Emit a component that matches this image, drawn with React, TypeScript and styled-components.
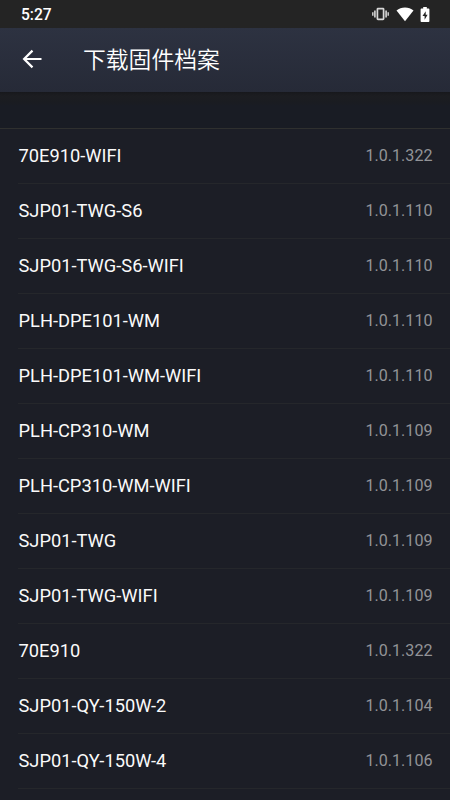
import React from 'react';
import styled, { createGlobalStyle } from 'styled-components';

const GlobalStyle = createGlobalStyle`
  * { box-sizing: border-box; }
  body {
    margin: 0;
    overflow: hidden;
    background: #1c1e26;
    font-family: Roboto, "Noto Sans CJK SC", sans-serif;
  }
`;

const Screen = styled.div`
  width: 100%;
  height: 100vh;
  display: flex;
  flex-direction: column;
  overflow: hidden;
  background: #1c1e26;
`;

const StatusBar = styled.div`
  flex: none;
  height: 28px;
  padding: 0 20px 0 21px;
  display: flex;
  align-items: center;
  justify-content: space-between;
  background: #242424;
  color: #fff;
`;

const Clock = styled.span`
  padding-top: 2px;
  font-size: 15.6px;
  line-height: 28px;
  font-weight: 500;
`;

const StatusIcons = styled.div`
  display: flex;
  align-items: center;
  gap: 6.5px;
  svg { display: block; }
`;

const AppBar = styled.header`
  flex: none;
  height: 64px;
  padding: 0 0 2px 20px;
  display: flex;
  align-items: center;
  background: linear-gradient(#2d3241, #262a37);
  color: #fff;
`;

const BackButton = styled.button`
  width: 24px;
  height: 24px;
  padding: 0;
  border: 0;
  background: none;
  color: inherit;
  svg { display: block; }
`;

const Title = styled.h1`
  margin: 0 0 0 39px;
  padding-top: 3px;
  font-size: 22.8px;
  line-height: 32px;
  font-weight: 350;
`;

const SectionGap = styled.div`
  flex: none;
  height: 37px;
  background: linear-gradient(#17181c, #1c1d21 4px, #1a1c21 10px, #191c24 14px);
  border-bottom: 1px solid #2f302f;
`;

const List = styled.ul`
  margin: 0;
  padding: 0;
  list-style: none;
`;

const Row = styled.li`
  height: 55px;
  margin-left: 18px;
  padding: 0 17.5px 0 0.5px;
  display: flex;
  align-items: center;
  justify-content: space-between;
  border-bottom: 1px solid #25272b;
`;

const Name = styled.span`
  color: #fafafa;
  font-size: 18.3px;
  line-height: 24px;
`;

const Version = styled.span`
  color: #929397;
  font-size: 16.1px;
  line-height: 24px;
`;

const firmware = [
  ['70E910-WIFI', '1.0.1.322'],
  ['SJP01-TWG-S6', '1.0.1.110'],
  ['SJP01-TWG-S6-WIFI', '1.0.1.110'],
  ['PLH-DPE101-WM', '1.0.1.110'],
  ['PLH-DPE101-WM-WIFI', '1.0.1.110'],
  ['PLH-CP310-WM', '1.0.1.109'],
  ['PLH-CP310-WM-WIFI', '1.0.1.109'],
  ['SJP01-TWG', '1.0.1.109'],
  ['SJP01-TWG-WIFI', '1.0.1.109'],
  ['70E910', '1.0.1.322'],
  ['SJP01-QY-150W-2', '1.0.1.104'],
  ['SJP01-QY-150W-4', '1.0.1.106'],
];

const VibrateIcon = () => (
  <svg width="17" height="14" viewBox="0 0 17 14" fill="none" stroke="#d8d8d8">
    <rect x="5.4" y="1.7" width="6.2" height="10.6" rx="0.6" strokeWidth="1.7" />
    <path d="M2.9 3.5v7M14.1 3.5v7" strokeWidth="1.6" />
    <path d="M0.8 5.2v3.6M16.2 5.2v3.6" strokeWidth="1.4" />
  </svg>
);

const WifiIcon = () => (
  <svg width="18" height="15" viewBox="0 0 18 15" fill="#fff">
    <path d="M9 14.2 0.5 3.6C2.8 1.6 5.8 0.6 9 0.6s6.2 1 8.5 3z" />
  </svg>
);

const BatteryIcon = () => (
  <svg width="10" height="15" viewBox="0 0 10 15">
    <path d="M3.2 0h3.6v1.500h1.8q.8 0 .8.9v11.7q0 .9-.8.9H1.4q-.8 0-.8-.9V2.4q0-.9.8-.9h1.8z" fill="#fff" />
    <path d="M5.7 4.200 2.500 9h2.100v3.800L7.600 7.700H5.700z" fill="#242424" />
  </svg>
);

const ArrowIcon = () => (
  <svg width="24" height="24" viewBox="0 0 24 24" fill="none" stroke="#fff" strokeWidth="2.2">
    <path d="M21.5 12H4.5M12.500 3.600 4.100 12l8.400 8.400" />
  </svg>
);

export default function App() {
  return (
    <Screen>
      <GlobalStyle />
      <StatusBar>
        <Clock>5:27</Clock>
        <StatusIcons>
          <VibrateIcon />
          <WifiIcon />
          <BatteryIcon />
        </StatusIcons>
      </StatusBar>
      <AppBar>
        <BackButton aria-label="返回"><ArrowIcon /></BackButton>
        <Title>下载固件档案</Title>
      </AppBar>
      <SectionGap />
      <List>
        {firmware.map(([name, version]) => (
          <Row key={name}>
            <Name>{name}</Name>
            <Version>{version}</Version>
          </Row>
        ))}
      </List>
    </Screen>
  );
}
